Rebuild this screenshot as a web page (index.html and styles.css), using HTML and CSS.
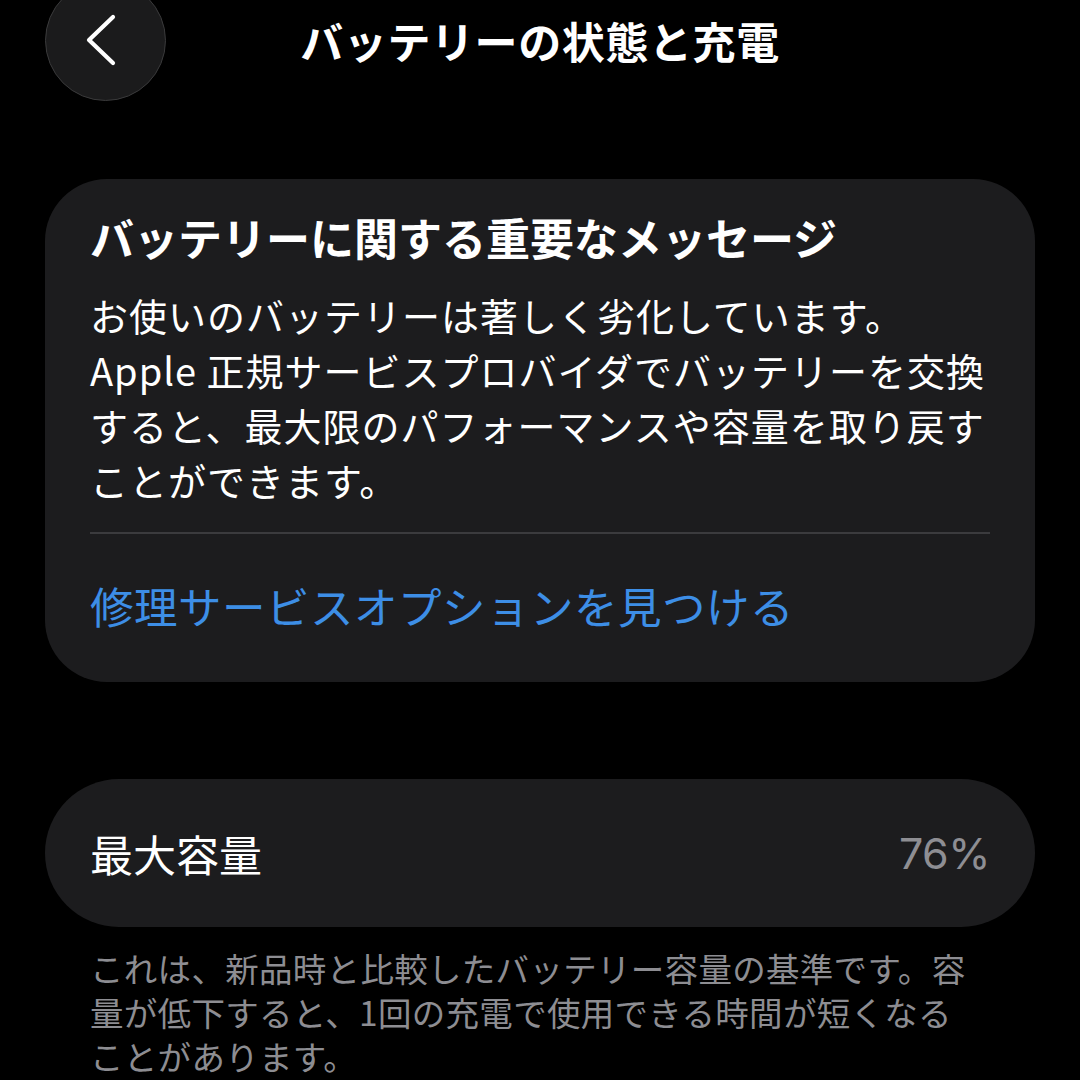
FILE: index.html
```html
<!DOCTYPE html>
<html lang="ja">
<head>
<meta charset="utf-8">
<title>バッテリーの状態と充電</title>
<link rel="stylesheet" href="styles.css">
</head>
<body>
<div class="screen">
  <header class="nav">
    <div class="nav-left">
      <button class="back" aria-label="戻る">
        <svg class="chev" width="40" height="60" viewBox="0 0 40 60">
          <path d="M32 6 L8 29 L32 52" fill="none" stroke="#ffffff" stroke-width="4.2" stroke-linecap="round" stroke-linejoin="round"/>
        </svg>
      </button>
    </div>
    <h1 class="nav-title">バッテリーの状態と充電</h1>
    <div class="nav-right"></div>
  </header>

  <section class="card msg">
    <h2 class="msg-title">バッテリーに関する重要なメッセージ</h2>
    <p class="msg-body">お使いのバッテリーは著しく劣化しています。<br>Apple 正規サービスプロバイダでバッテリーを交換<br>すると、最大限のパフォーマンスや容量を取り戻す<br>ことができます。</p>
    <div class="divider"></div>
    <a class="link" href="#">修理サービスオプションを見つける</a>
  </section>

  <section class="card capacity">
    <span class="cap-label">最大容量</span>
    <span class="cap-value">76%</span>
  </section>

  <p class="footnote">これは、新品時と比較したバッテリー容量の基準です。容<br>量が低下すると、1回の充電で使用できる時間が短くなる<br>ことがあります。</p>
</div>
</body>
</html>
```

FILE: styles.css
```css
html, body {
  margin: 0;
  padding: 0;
  background: #000000;
}
body {
  width: 1080px;
  height: 1080px;
  overflow: hidden;
  font-family: "Noto Sans CJK JP", "Noto Sans", sans-serif;
  color: #ffffff;
}
.screen {
  display: flex;
  flex-direction: column;
  padding: 0 45px;
}
.nav {
  display: grid;
  grid-template-columns: 1fr auto 1fr;
  align-items: center;
  height: 121px;
  margin-top: -20px;
}
.nav-left {
  display: flex;
  align-items: center;
}
.back {
  width: 121px;
  height: 121px;
  border-radius: 50%;
  background: #1b1b1c;
  border: 1.5px solid #3a3a3b;
  padding: 0;
  margin: 0;
  display: flex;
  align-items: center;
  justify-content: center;
  box-sizing: border-box;
}
.chev {
  display: block;
  margin-left: -10px;
}
.nav-title {
  margin: 0;
  font-size: 43px;
  font-weight: 700;
  letter-spacing: 0.6px;
  line-height: 1.2;
  white-space: nowrap;
}
.card {
  background: #1c1c1e;
}
.msg {
  margin-top: 78px;
  border-radius: 62px;
  padding: 30px 45px 48px;
  display: flex;
  flex-direction: column;
}
.msg-title {
  margin: 0;
  font-size: 44px;
  font-weight: 700;
  line-height: 56px;
  white-space: nowrap;
}
.msg-body {
  margin: 22px 0 0;
  font-size: 38px;
  font-weight: 400;
  line-height: 55px;
  letter-spacing: 1px;
  white-space: nowrap;
}
.divider {
  height: 2px;
  background: #3b3b3e;
  margin-top: 25px;
}
.link {
  margin-top: 44px;
  font-size: 43.5px;
  line-height: 56px;
  letter-spacing: 0.5px;
  color: #3d8ee6;
  text-decoration: none;
  white-space: nowrap;
}
.capacity {
  margin-top: 97px;
  height: 148px;
  border-radius: 74px;
  padding: 0 45px;
  display: flex;
  align-items: center;
  justify-content: space-between;
  box-sizing: border-box;
}
.cap-label {
  font-size: 43px;
  line-height: 1;
}
.cap-value {
  font-family: "Inter", "Noto Sans", sans-serif;
  font-size: 43px;
  color: #8e8e93;
  letter-spacing: -0.5px;
}
.footnote {
  margin: 19px 45px 0;
  font-size: 33.5px;
  line-height: 44px;
  letter-spacing: 0.3px;
  color: #8d8d92;
  white-space: nowrap;
}
```
